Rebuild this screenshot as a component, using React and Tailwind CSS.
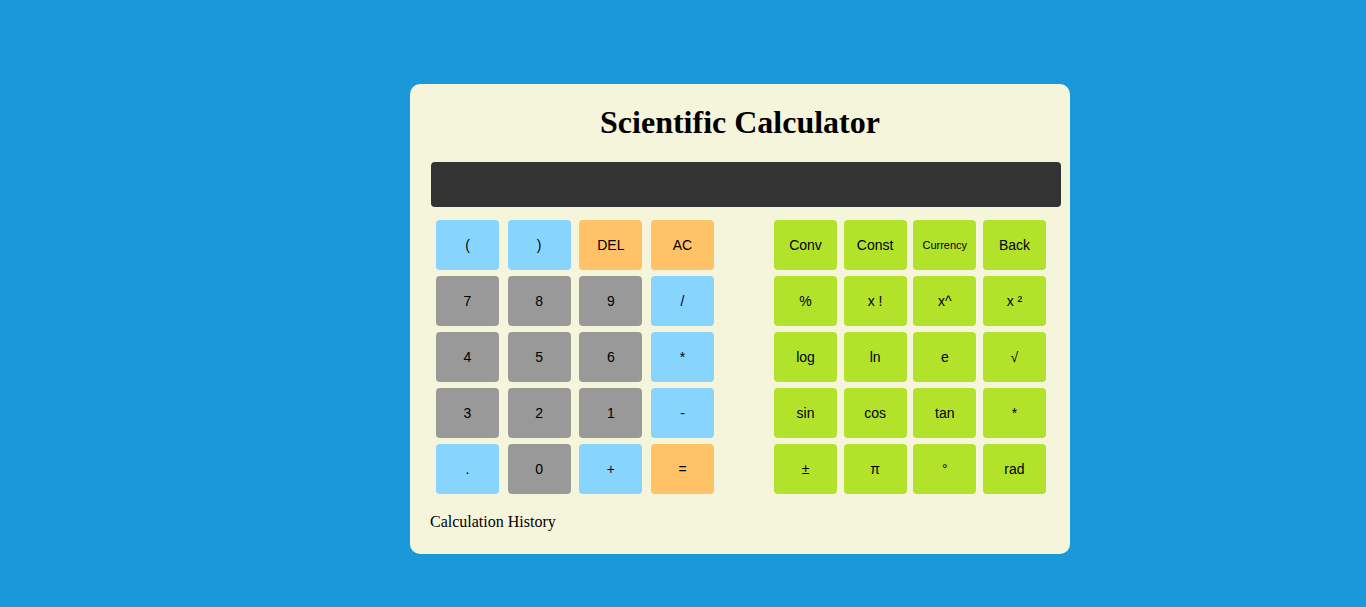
const leftKeys = [
  ['(', 'blue'], [')', 'blue'], ['DEL', 'orange'], ['AC', 'orange'],
  ['7', 'gray'], ['8', 'gray'], ['9', 'gray'], ['/', 'blue'],
  ['4', 'gray'], ['5', 'gray'], ['6', 'gray'], ['*', 'blue'],
  ['3', 'gray'], ['2', 'gray'], ['1', 'gray'], ['-', 'blue'],
  ['.', 'blue'], ['0', 'gray'], ['+', 'blue'], ['=', 'orange'],
];

const rightKeys = [
  'Conv', 'Const', 'Currency', 'Back',
  '%', 'x !', 'x^', 'x ²',
  'log', 'ln', 'e', '√',
  'sin', 'cos', 'tan', '*',
  '±', 'π', '°', 'rad',
];

const colors = {
  blue: 'bg-[#87d4ff]',
  orange: 'bg-[#ffc266]',
  gray: 'bg-[#999999]',
};

export default function App() {
  return (
    <div className="min-h-screen w-full bg-[#1998da] pt-[84px] pl-[410px]">
      <div className="w-[660px] h-[470px] rounded-[10px] bg-[#f5f5dc] pt-[20px]">
        {/* Title */}
        <h1 className="h-[37px] leading-[37px] mb-[21px] text-center text-[32px] font-bold text-black font-['Liberation_Serif',serif]">
          Scientific Calculator
        </h1>

        {/* Display */}
        <div className="ml-[21px] w-[630px] h-[45px] rounded-[4px] bg-[#333333]" />

        {/* Keypads */}
        <div className="flex mt-[13px] pl-[26px] font-['Liberation_Sans',Arial,sans-serif] text-[14px] text-black">
          <div className="grid grid-cols-[63px_63px_63px_63px] gap-x-[8.67px] gap-y-[6px]">
            {leftKeys.map(([label, c], i) => (
              <button
                key={i}
                className={`h-[50px] rounded-[4px] flex items-center justify-center ${colors[c]}`}
              >
                {label}
              </button>
            ))}
          </div>

          <div className="ml-[60px] grid grid-cols-[63px_63px_63px_63px] gap-x-[6.67px] gap-y-[6px]">
            {rightKeys.map((label, i) => (
              <button
                key={i}
                className={`h-[50px] rounded-[4px] bg-[#b2e32a] flex items-center justify-center ${
                  label === 'Currency' ? 'text-[11px]' : 'text-[14px]'
                }`}
              >
                {label}
              </button>
            ))}
          </div>
        </div>

        {/* History */}
        <div className="mt-[16px] ml-[20px] text-[16px] text-black font-['Liberation_Serif',serif]">
          Calculation History
        </div>
      </div>
    </div>
  );
}
